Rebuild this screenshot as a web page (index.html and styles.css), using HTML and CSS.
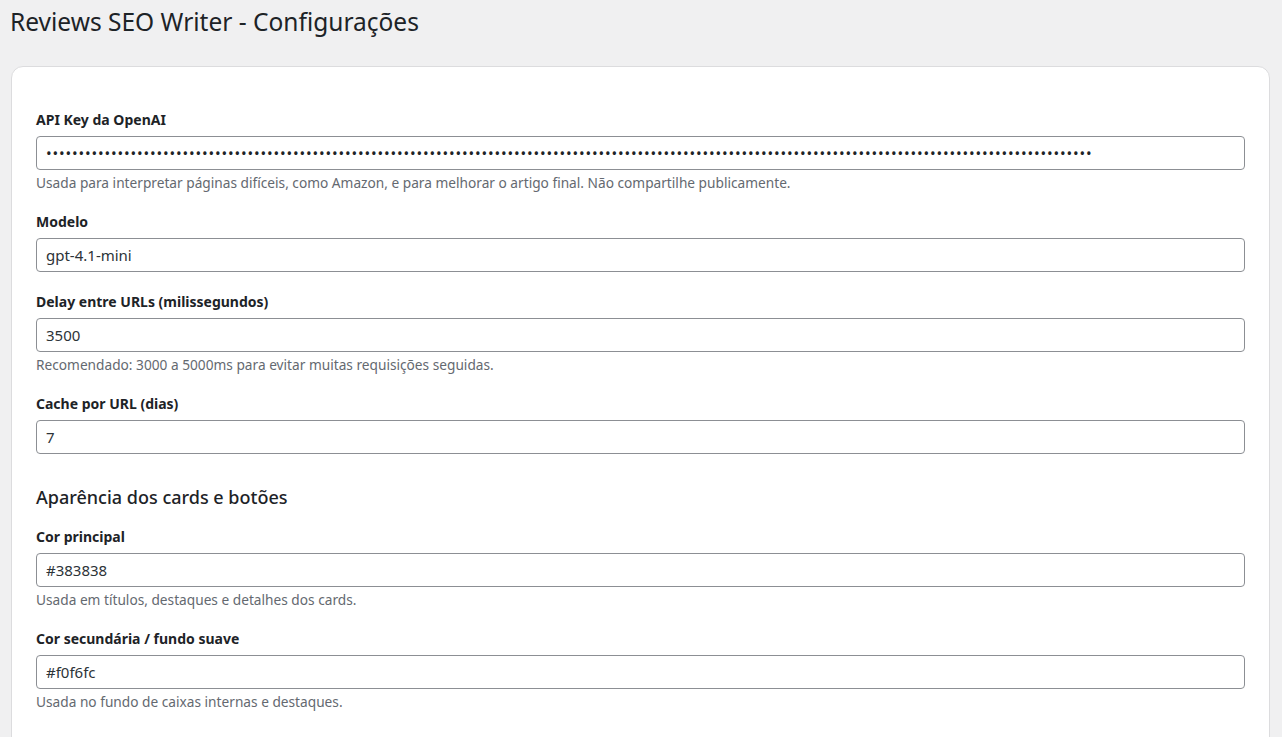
FILE: index.html
```html
<!DOCTYPE html>
<html lang="pt-BR">
<head>
<meta charset="utf-8">
<title>Reviews SEO Writer - Configurações</title>
<link rel="stylesheet" href="styles.css">
</head>
<body>
<div class="wrap">
  <h1 class="page-title">Reviews SEO Writer - Configurações</h1>
  <div class="card">
    <form class="settings">
      <div class="field">
        <label class="field-label" for="api">API Key da OpenAI</label>
        <input class="field-input field-secret" id="api" type="password" value="sk-proj-aaaaaaaaaaaaaaaaaaaaaaaaaaaaaaaaaaaaaaaaaaaaaaaaaaaaaaaaaaaaaaaaaaaaaaaaaaaaaaaaaaaaaaaaaaaaaaaaaaaaaaaaaaaaaaaaaaaaaaaaaaaaaaaaaaaaaaaaaaaaaaaaaaaaaaaaa">
        <p class="field-desc">Usada para interpretar páginas difíceis, como Amazon, e para melhorar o artigo final. Não compartilhe publicamente.</p>
      </div>
      <div class="field">
        <label class="field-label" for="model">Modelo</label>
        <input class="field-input" id="model" type="text" value="gpt-4.1-mini">
      </div>
      <div class="field">
        <label class="field-label" for="delay">Delay entre URLs (milissegundos)</label>
        <input class="field-input" id="delay" type="text" value="3500">
        <p class="field-desc">Recomendado: 3000 a 5000ms para evitar muitas requisições seguidas.</p>
      </div>
      <div class="field">
        <label class="field-label" for="cache">Cache por URL (dias)</label>
        <input class="field-input" id="cache" type="text" value="7">
      </div>
      <h2 class="section-title">Aparência dos cards e botões</h2>
      <div class="field">
        <label class="field-label" for="primary">Cor principal</label>
        <input class="field-input" id="primary" type="text" value="#383838">
        <p class="field-desc">Usada em títulos, destaques e detalhes dos cards.</p>
      </div>
      <div class="field">
        <label class="field-label" for="secondary">Cor secundária / fundo suave</label>
        <input class="field-input" id="secondary" type="text" value="#f0f6fc">
        <p class="field-desc">Usada no fundo de caixas internas e destaques.</p>
      </div>
    </form>
  </div>
</div>
</body>
</html>
```

FILE: styles.css
```css
html, body {
  margin: 0;
  padding: 0;
  background: #f0f0f1;
  font-family: "Noto Sans", "Open Sans", sans-serif;
  color: #1d2327;
}

.wrap {
  padding: 7px 12px 0 11px;
}

.page-title {
  margin: 0 0 29px -1px;
  font-size: 24.5px;
  line-height: 30px;
  font-weight: 400;
  color: #1d2327;
}

.card {
  background: #fff;
  border: 1px solid #dcdcde;
  border-radius: 12px;
  padding: 43px 24px 40px 24px;
  min-height: 700px;
}

.settings {
  display: flex;
  flex-direction: column;
}

.field {
  margin-bottom: 20px;
}

.field-label {
  display: block;
  font-size: 14px;
  line-height: 20px;
  font-weight: 700;
  color: #1d2327;
  margin-bottom: 6px;
}

.field-input {
  display: block;
  box-sizing: border-box;
  width: 100%;
  height: 34px;
  margin: 0;
  padding: 0 9px;
  border: 1px solid #8c8f94;
  border-radius: 4px;
  background: #fff;
  font-family: inherit;
  font-size: 15px;
  color: #2c3338;
  outline: none;
}

.field-secret {
  letter-spacing: 0.86px;
  color: #1d2327;
}

.field-desc {
  margin: 4px 0 0;
  font-size: 13.7px;
  line-height: 18px;
  color: #646970;
}

.section-title {
  margin: 11px 0 18px;
  font-size: 18px;
  line-height: 24px;
  font-weight: 500;
  color: #1d2327;
}
```
